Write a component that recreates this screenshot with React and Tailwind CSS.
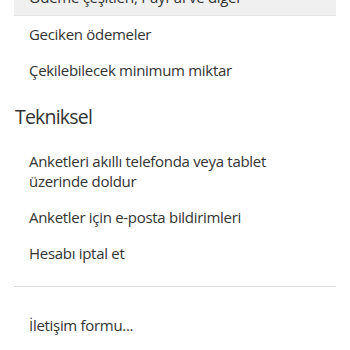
export default function App() {
  const item = "px-[15px] py-2 text-[15px] leading-5 tracking-[-0.3px] text-[#333]";
  return (
    <div className="w-[350px] h-[350px] overflow-hidden bg-white" style={{ fontFamily: '"Open Sans", sans-serif' }}>
      <div className="mx-[14px] mt-[-21px] w-[322px]">
        <div className={item + " bg-[#f0f0f0] border-b border-[#e4e4e4]"}>Ödeme çeşitleri, PayPal ve diğer</div>
        <div className={item}>Geciken ödemeler</div>
        <div className={item}>Çekilebilecek minimum miktar</div>
        <div className="mt-[15px] mb-3 px-px text-[19.5px] leading-7 tracking-[-0.8px] text-[#333]">Tekniksel</div>
        <div className={item}>Anketleri akıllı telefonda veya tablet üzerinde doldur</div>
        <div className={item}>Anketler için e-posta bildirimleri</div>
        <div className={item}>Hesabı iptal et</div>
        <div className="mt-[15px] mb-5 h-px bg-[#dcdcdc]" />
        <div className={item}>İletişim formu...</div>
      </div>
    </div>
  );
}
